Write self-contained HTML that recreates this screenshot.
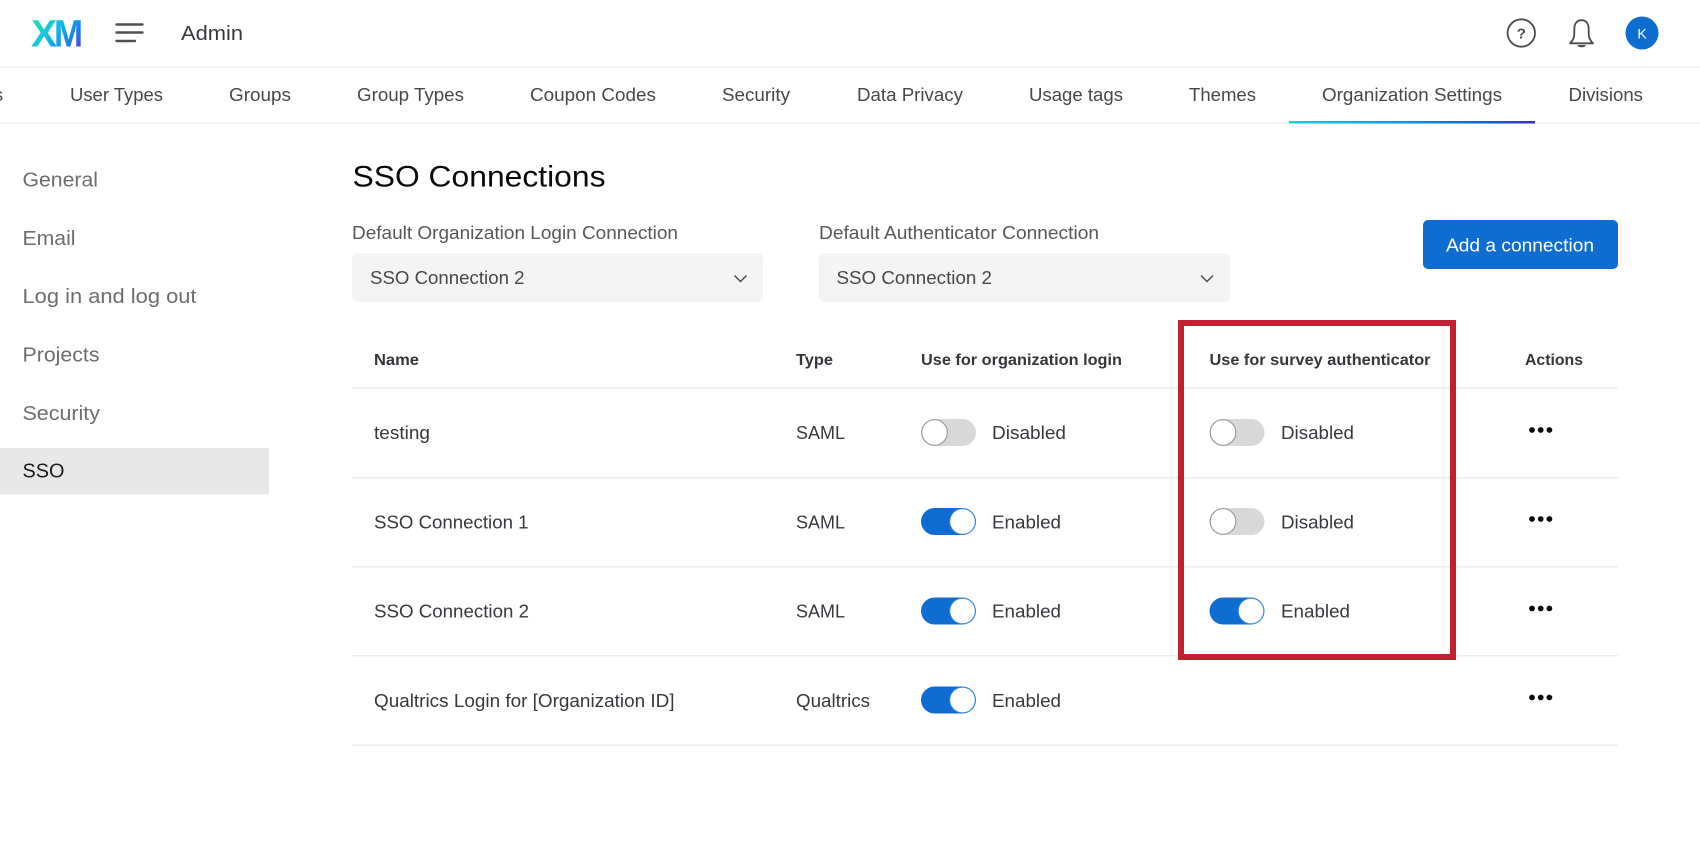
<!DOCTYPE html>
<html lang="en">
<head>
<meta charset="utf-8">
<title>SSO Connections</title>
<style>
html,body{margin:0;padding:0;background:#fff;width:1700px;height:850px;overflow:hidden}
svg{display:block;position:absolute;left:0;top:0}
text{font-family:"Liberation Sans",sans-serif;font-size:18.5px;fill:#36393d}
.tab{fill:#45484c}
.side{fill:#6b6d70;font-size:20px}
.lab{fill:#55585b}
.th{font-weight:bold;font-size:16px;fill:#33363a}
</style>
</head>
<body>
<svg width="1700" height="850" viewBox="0 0 1700 850" xmlns="http://www.w3.org/2000/svg">
<defs>
<linearGradient id="xm" gradientUnits="userSpaceOnUse" x1="34" y1="16" x2="80" y2="50">
<stop offset="0" stop-color="#2fe0a6"/><stop offset=".35" stop-color="#14c6dc"/><stop offset=".62" stop-color="#0f9df0"/><stop offset=".85" stop-color="#2a6ce4"/><stop offset="1" stop-color="#5b35d8"/>
</linearGradient>
<linearGradient id="ul" gradientUnits="userSpaceOnUse" x1="1289" y1="0" x2="1535" y2="0">
<stop offset="0" stop-color="#19cfd6"/><stop offset=".5" stop-color="#0f8fe0"/><stop offset=".8" stop-color="#1560d0"/><stop offset="1" stop-color="#3f2fb8"/>
</linearGradient>
<g id="off"><rect x="0" y="0" width="55" height="27" rx="13.5" fill="#d8d8d8"/><circle cx="13.5" cy="13.5" r="12.8" fill="#fff" stroke="#9a9ea3" stroke-width="1.2"/></g>
<g id="on"><rect x="0" y="0" width="55" height="27" rx="13.5" fill="#0f6dd1"/><circle cx="41.5" cy="13.5" r="12.8" fill="#fff" stroke="#3a8ae0" stroke-width="1"/></g>
<g id="dots"><circle cx="0" cy="0" r="2.9" fill="#0a0a0a"/><circle cx="8.7" cy="0" r="2.9" fill="#0a0a0a"/><circle cx="17.4" cy="0" r="2.9" fill="#0a0a0a"/></g>
</defs>

<!-- Header -->
<text x="31" y="46.700" font-weight="bold" textLength="26" lengthAdjust="spacingAndGlyphs" style="font-size:38px;fill:url(#xm)">X</text>
<text x="54" y="46.700" font-weight="bold" textLength="29" lengthAdjust="spacingAndGlyphs" style="font-size:38px;fill:url(#xm)">M</text>
<path d="M116.500 24.500H142.500M116.500 32.500H142.500M116.500 41H135" fill="none" stroke="#4d5054" stroke-width="2.400" stroke-linecap="round"/>
<text x="181" y="40" textLength="62" lengthAdjust="spacingAndGlyphs" style="font-size:20.500px">Admin</text>

<circle cx="1521.300" cy="33" r="13.700" fill="none" stroke="#4a4d51" stroke-width="1.800"/>
<text x="1521.300" y="38.500" text-anchor="middle" font-weight="bold" style="font-size:15px;fill:#4a4d51">?</text>
<path d="M1570 43.300C1572.500 41 1574.300 38 1574.300 34V29C1574.300 23.500 1577 20.200 1581.500 20.200C1586 20.200 1588.700 23.500 1588.700 29V34C1588.700 38 1590.500 41 1593 43.300Z" fill="none" stroke="#4a4d51" stroke-width="1.800" stroke-linejoin="round"/>
<path d="M1577.500 45H1586C1585.300 46.800 1583.300 47.300 1581.700 47.300C1580 47.300 1578.200 46.800 1577.500 45Z" fill="#4a4d51"/>
<circle cx="1642" cy="33" r="16.500" fill="#0f6dd1"/>
<text x="1642" y="38.300" text-anchor="middle" style="font-size:14px;fill:#fff">K</text>
<rect x="0" y="66" width="1700" height="1.500" fill="#eeeeee"/>

<!-- Tabs -->
<text class="tab" x="-6.200" y="101">s</text>
<text class="tab" x="70" y="101" textLength="93" lengthAdjust="spacingAndGlyphs">User Types</text>
<text class="tab" x="229" y="101" textLength="62" lengthAdjust="spacingAndGlyphs">Groups</text>
<text class="tab" x="357" y="101" textLength="107" lengthAdjust="spacingAndGlyphs">Group Types</text>
<text class="tab" x="530" y="101" textLength="126" lengthAdjust="spacingAndGlyphs">Coupon Codes</text>
<text class="tab" x="722" y="101" textLength="68" lengthAdjust="spacingAndGlyphs">Security</text>
<text class="tab" x="857" y="101" textLength="106" lengthAdjust="spacingAndGlyphs">Data Privacy</text>
<text class="tab" x="1029" y="101" textLength="94" lengthAdjust="spacingAndGlyphs">Usage tags</text>
<text class="tab" x="1189" y="101" textLength="67" lengthAdjust="spacingAndGlyphs">Themes</text>
<text class="tab" x="1322" y="101" textLength="180" lengthAdjust="spacingAndGlyphs">Organization Settings</text>
<text class="tab" x="1568.500" y="101" textLength="74.500" lengthAdjust="spacingAndGlyphs">Divisions</text>
<rect x="0" y="122" width="1700" height="1.500" fill="#eeeeee"/>
<rect x="1289" y="121" width="246" height="2.500" fill="url(#ul)"/>

<!-- Sidebar -->
<text class="side" x="22.500" y="186.500" textLength="75.500" lengthAdjust="spacingAndGlyphs">General</text>
<text class="side" x="22.500" y="245" textLength="53" lengthAdjust="spacingAndGlyphs">Email</text>
<text class="side" x="22.500" y="303" textLength="174" lengthAdjust="spacingAndGlyphs">Log in and log out</text>
<text class="side" x="22.500" y="361.500" textLength="77" lengthAdjust="spacingAndGlyphs">Projects</text>
<text class="side" x="22.500" y="420" textLength="77.500" lengthAdjust="spacingAndGlyphs">Security</text>
<rect x="0" y="448" width="269" height="46.500" fill="#e8e8e8"/>
<text class="side" x="22.500" y="477.500" textLength="42" lengthAdjust="spacingAndGlyphs" style="fill:#1c1c1f">SSO</text>

<!-- Title + controls -->
<text x="352.500" y="186.700" textLength="253" lengthAdjust="spacingAndGlyphs" style="font-size:30px;fill:#0a0a0a">SSO Connections</text>

<text class="lab" x="352" y="239" textLength="326" lengthAdjust="spacingAndGlyphs">Default Organization Login Connection</text>
<rect x="352" y="253" width="411" height="49" rx="5" fill="#f4f4f4"/>
<text x="370" y="284" textLength="154.500" lengthAdjust="spacingAndGlyphs" style="fill:#45484c">SSO Connection 2</text>
<path d="M734.500 275.500L740.500 281.500L746.500 275.500" fill="none" stroke="#4a4d51" stroke-width="1.500"/>

<text class="lab" x="819" y="239" textLength="280" lengthAdjust="spacingAndGlyphs">Default Authenticator Connection</text>
<rect x="819" y="253" width="411" height="49" rx="5" fill="#f4f4f4"/>
<text x="836.500" y="284" textLength="155.500" lengthAdjust="spacingAndGlyphs" style="fill:#45484c">SSO Connection 2</text>
<path d="M1201 275.500L1207 281.500L1213 275.500" fill="none" stroke="#4a4d51" stroke-width="1.500"/>

<rect x="1423" y="220" width="195" height="49" rx="5" fill="#0f6dd1"/>
<text x="1446" y="251.500" textLength="148" lengthAdjust="spacingAndGlyphs" style="fill:#fff">Add a connection</text>

<!-- Table -->
<text class="th" x="374" y="365" textLength="45" lengthAdjust="spacingAndGlyphs">Name</text>
<text class="th" x="796" y="365" textLength="37" lengthAdjust="spacingAndGlyphs">Type</text>
<text class="th" x="921" y="365" textLength="201" lengthAdjust="spacingAndGlyphs">Use for organization login</text>
<text class="th" x="1209.500" y="365" textLength="221" lengthAdjust="spacingAndGlyphs">Use for survey authenticator</text>
<text class="th" x="1525" y="365" textLength="58" lengthAdjust="spacingAndGlyphs">Actions</text>

<rect x="352" y="387.500" width="1266" height="1.500" fill="#eeeeee"/>
<rect x="352" y="477" width="1266" height="1.500" fill="#eeeeee"/>
<rect x="352" y="566" width="1266" height="1.500" fill="#eeeeee"/>
<rect x="352" y="655" width="1266" height="1.500" fill="#eeeeee"/>
<rect x="352" y="744.500" width="1266" height="1.500" fill="#eeeeee"/>

<!-- Row 1 -->
<text x="374" y="439" textLength="56" lengthAdjust="spacingAndGlyphs">testing</text>
<text x="796" y="439" textLength="49" lengthAdjust="spacingAndGlyphs">SAML</text>
<use href="#off" x="921" y="419"/>
<text x="992" y="439" textLength="74" lengthAdjust="spacingAndGlyphs">Disabled</text>
<use href="#off" x="1209.500" y="419"/>
<text x="1281" y="439" textLength="73" lengthAdjust="spacingAndGlyphs">Disabled</text>
<use href="#dots" x="1532" y="430"/>

<!-- Row 2 -->
<text x="374" y="528.500" textLength="154.500" lengthAdjust="spacingAndGlyphs">SSO Connection 1</text>
<text x="796" y="528.500" textLength="49" lengthAdjust="spacingAndGlyphs">SAML</text>
<use href="#on" x="921" y="508"/>
<text x="992" y="528.500" textLength="69" lengthAdjust="spacingAndGlyphs">Enabled</text>
<use href="#off" x="1209.500" y="508"/>
<text x="1281" y="528.500" textLength="73" lengthAdjust="spacingAndGlyphs">Disabled</text>
<use href="#dots" x="1532" y="519"/>

<!-- Row 3 -->
<text x="374" y="617.500" textLength="155" lengthAdjust="spacingAndGlyphs">SSO Connection 2</text>
<text x="796" y="617.500" textLength="49" lengthAdjust="spacingAndGlyphs">SAML</text>
<use href="#on" x="921" y="597.500"/>
<text x="992" y="617.500" textLength="69" lengthAdjust="spacingAndGlyphs">Enabled</text>
<use href="#on" x="1209.500" y="597.500"/>
<text x="1281" y="617.500" textLength="69" lengthAdjust="spacingAndGlyphs">Enabled</text>
<use href="#dots" x="1532" y="608.500"/>

<!-- Row 4 -->
<text x="374" y="707" textLength="300.500" lengthAdjust="spacingAndGlyphs">Qualtrics Login for [Organization ID]</text>
<text x="796" y="707" textLength="74" lengthAdjust="spacingAndGlyphs">Qualtrics</text>
<use href="#on" x="921" y="686.500"/>
<text x="992" y="707" textLength="69" lengthAdjust="spacingAndGlyphs">Enabled</text>
<use href="#dots" x="1532" y="697.500"/>

<!-- Highlight box -->
<rect x="1181" y="323" width="272" height="334" fill="none" stroke="#c02232" stroke-width="6"/>
</svg>
</body>
</html>
